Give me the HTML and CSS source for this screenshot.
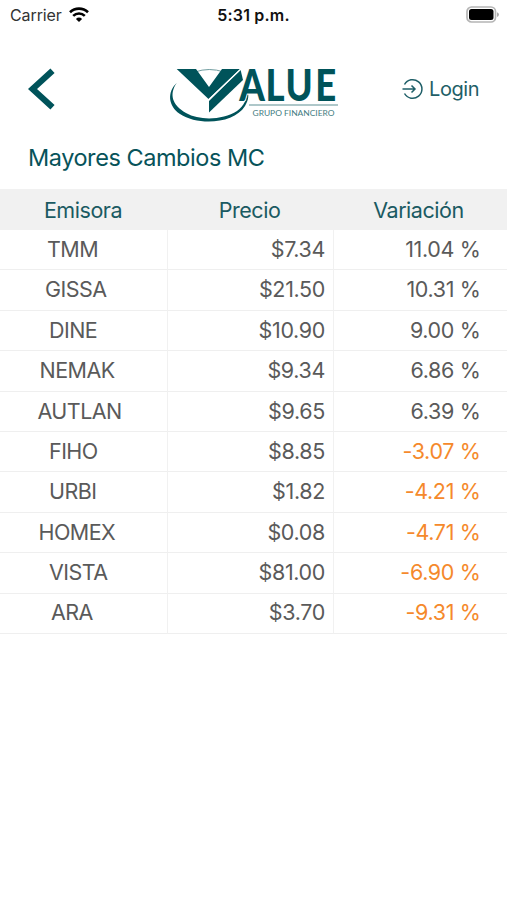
FILE: index.html
```html
<!DOCTYPE html>
<html lang="es">
<head>
<meta charset="utf-8">
<meta name="viewport" content="width=device-width, initial-scale=1">
<title>Mayores Cambios MC</title>
<link rel="stylesheet" href="styles.css">
</head>
<body>
<div class="status">
  <div class="carrier"><span>Carrier</span>
    <svg class="wifi" width="20" height="15" viewBox="0 0 20 15"><g fill="none" stroke="#000" stroke-width="2.6"><path d="M1 5.2a13 13 0 0 1 18 0"/><path d="M4.2 8.900a8.300 8.300 0 0 1 11.600 0"/></g><path d="M6.900 11.900a4.500 4.500 0 0 1 6.200 0L10 15z"/></svg>
  </div>
  <div class="clock">5:31 p.m.</div>
  <svg class="battery" width="34" height="18" viewBox="0 0 34 18"><rect x="1" y="1" width="28.5" height="15" rx="4.5" fill="#fff" stroke="#b5b5b5" stroke-width="1.7"/><rect x="3" y="3" width="24.5" height="11" rx="2.5"/><path d="M31 6.2q2 .7 2 2.4t-2 2.4z" fill="#aaa"/></svg>
</div>
<header class="top">
  <svg class="back" width="28" height="42" viewBox="0 0 28 42"><path d="M24.500 2.800 4.500 21l20 18.200" fill="none" stroke="#00535a" stroke-width="6.200"/></svg>
  <svg class="logo" width="172" height="58" viewBox="0 0 172 58">
    <path d="M27 7q14-5 29 0" fill="none" stroke="#6f9c9f" stroke-width="1"/>
    <path d="M8.700 18C-1 27 0 41 12 49c18 12 54 10 65-8 4-7 4-11 2-17 1 9-3 17-10 22-14 9-37 10-51 2C4 40 1 29 8.700 18z" fill="#00535a"/>
    <path d="M8.700 4H28l13 18L54 4h18L40.500 34z" fill="#00535a"/>
    <path d="M72.500 4.500 75 15 41 47.500V36z" fill="#00535a"/>
    <path d="M40.500 35 73 4" stroke="#fff" stroke-width="1.200"/>
    <text class="brand" transform="scale(.83 1)" x="86 117.500 141.500 177.500" y="36">ALUE</text>
    <path d="M81 40h89" stroke="#5f8f93" stroke-width="1.200"/>
    <text class="tag" x="84.500" y="50.500" textLength="82" lengthAdjust="spacingAndGlyphs">GRUPO FINANCIERO</text>
  </svg>
  <div class="login">
    <svg width="22" height="22" viewBox="0 0 22 22" fill="none" stroke="#1f5f68" stroke-width="1.500"><path d="M2.500 6.500a9.300 9.300 0 1 1 0 9"/><path d="M.5 11H13M9.500 7.500 13 11l-3.500 3.500"/></svg>
    <span>Login</span>
  </div>
</header>
<h1>Mayores Cambios MC</h1>
<table>
  <thead><tr><th>Emisora</th><th>Precio</th><th>Variación</th></tr></thead>
  <tbody>
    <tr><td>TMM</td><td>$7.34</td><td>11.04 %</td></tr>
    <tr><td>GISSA</td><td>$21.50</td><td>10.31 %</td></tr>
    <tr><td>DINE</td><td>$10.90</td><td>9.00 %</td></tr>
    <tr><td>NEMAK</td><td>$9.34</td><td>6.86 %</td></tr>
    <tr><td>AUTLAN</td><td>$9.65</td><td>6.39 %</td></tr>
    <tr class="down"><td>FIHO</td><td>$8.85</td><td>-3.07 %</td></tr>
    <tr class="down"><td>URBI</td><td>$1.82</td><td>-4.21 %</td></tr>
    <tr class="down"><td>HOMEX</td><td>$0.08</td><td>-4.71 %</td></tr>
    <tr class="down"><td>VISTA</td><td>$81.00</td><td>-6.90 %</td></tr>
    <tr class="down"><td>ARA</td><td>$3.70</td><td>-9.31 %</td></tr>
  </tbody>
</table>
</body>
</html>
```
FILE: styles.css
```css
* { box-sizing: border-box; }
body { margin: 0; background: #fff; color: #5a5a5a; font-family: Inter, "Liberation Sans", sans-serif; }
.status { display: grid; grid-template-columns: 1fr auto 1fr; align-items: center; height: 30px; padding: 0 7px 0 10px; color: #111; font-size: 16px; }
.carrier { display: flex; align-items: center; gap: 7px; color: #333; }
.carrier span { letter-spacing: -0.1px; }
.wifi { margin-top: -1px; }
.clock { margin-left: -3px; font-weight: 600; letter-spacing: 0.2px; }
.battery { justify-self: end; margin-top: -1px; }
.top { display: grid; grid-template-columns: 168px 172px 1fr; align-items: center; height: 106px; }
.back { margin: 12px 0 0 28px; }
.logo { margin-top: 22px; overflow: visible; }
.brand { font-family: Lato, sans-serif; font-size: 44px; font-weight: 900; fill: #00535a; stroke: #fff; stroke-width: 2px; paint-order: stroke; }
.tag { font-family: Lato, sans-serif; font-size: 7.8px; fill: #3f7c81; }
.login { display: flex; align-items: center; gap: 5px; margin: 12px 0 0 62px; color: #1f5f68; font-size: 20px; letter-spacing: -0.4px; }
h1 { margin: 0; height: 53px; padding: 6px 0 0 28px; color: #07535a; font-size: 23.5px; font-weight: 400; letter-spacing: -0.45px; line-height: 32px; }
table { width: 507px; table-layout: fixed; border-collapse: separate; border-spacing: 0; font-size: 21.5px; letter-spacing: -0.35px; line-height: 26px; }
th { height: 41px; padding: 0; background: #f1f1f1; color: #1a5a62; font-size: 21.5px; font-weight: 400; letter-spacing: -0.45px; }
th:nth-child(1) { width: 168px; padding-right: 2px; }
th:nth-child(2) { width: 166px; padding-right: 3px; }
th:nth-child(3) { padding-right: 4px; }
td { height: 40.4px; padding: 0 0 1.5px; border-bottom: 1px solid #efefef; text-align: right; }
td:not(:last-child) { border-right: 1px solid #f1f1f1; }
td:nth-child(1) { padding-left: 49px; text-align: left; letter-spacing: -0.55px; }
td:nth-child(2) { padding-right: 8px; }
td:nth-child(3) { padding-right: 26.5px; }
tr:nth-child(1) td:first-child { padding-left: 47px; }
tr:nth-child(2) td:first-child { padding-left: 45px; }
tr:nth-child(4) td:first-child { padding-left: 39.5px; }
tr:nth-child(5) td:first-child { padding-left: 37.5px; }
tr:nth-child(8) td:first-child { padding-left: 38.5px; }
tr:nth-child(10) td:first-child { padding-left: 51px; }
.down td:last-child { color: #f5892b; }
```
